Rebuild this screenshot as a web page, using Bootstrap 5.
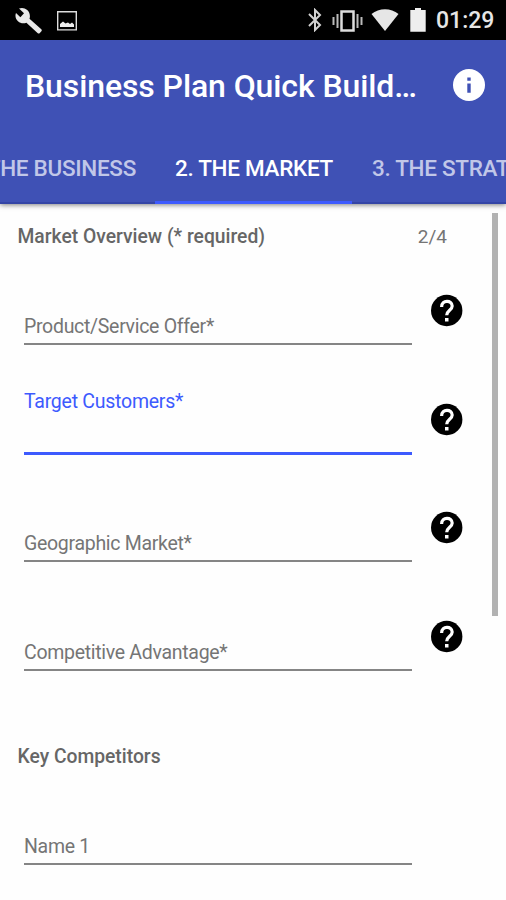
<!DOCTYPE html>
<html lang="en">
<head>
<meta charset="utf-8">
<meta name="viewport" content="width=device-width, initial-scale=1">
<title>Business Plan Quick Builder</title>
<link href="https://cdn.jsdelivr.net/npm/bootstrap@5.3.0/dist/css/bootstrap.min.css" rel="stylesheet">
<style>
body{font-family:Roboto,sans-serif;width:506px;height:900px;overflow:hidden;background:#fefefe;color:#666}
svg{display:block;flex:none}
.status{height:40px;background:#000;color:#e6e6e6;padding:0 13px 0 15px}
.clock{font-size:23px;font-weight:500;line-height:40px;width:57px;margin-left:10px;padding-top:2px}
.ic-photo{margin-left:14px;margin-top:1px}
.ic-vibrate{margin-left:9px;margin-top:1px}
.ic-wifi{margin-left:8px}
.ic-battery{margin-left:11px}
.appbar{height:164px;background:#3f51b5;color:#fff;box-shadow:0 1px 5px rgba(0,0,0,.5)}
.titlebar{height:90px;padding:0 20px 0 25px}
.titlebar h1{font-size:32px;font-weight:500;line-height:40px;letter-spacing:-.1px;padding-top:1px}
.tabs{height:74px}
.tab{height:74px;padding:2px 19px 0 20px;font-size:22.5px;font-weight:500;line-height:73px;letter-spacing:-.3px;color:#c1c7e8;flex:none;box-shadow:inset 0 -2px #3445a6}
.tab-prev{width:155px}
.tab-now{width:197px;color:#fff;box-shadow:inset 0 -3px #3d5afe}
.tab-next{width:154px}
.section{font-size:19.3px;font-weight:500;padding:2px 59px 0 17.5px}
.overview{height:64px}
.competitors{height:86px;padding-top:24px}
.count{font-weight:400;color:#757575;font-size:19px}
.field{height:108.6px;padding-left:24px}
.entry{width:388px;height:77px;border-bottom:2px solid #858585;color:#757575;font-size:19.5px;letter-spacing:-.3px;line-height:24px;padding-bottom:4px}
.entry.focused{height:78px;border-bottom:3px solid #3d5afe;color:#3d5afe;letter-spacing:-.25px;padding-top:13px}
.help{margin:26px 0 0 19px}
.scroll-thumb{right:8px;top:213px;width:6px;height:403px;background:#b2b2b2}
</style>
</head>
<body class="position-relative">
<header>
  <div class="status d-flex align-items-center">
    <svg width="28" height="27" viewBox="0 0 28 27"><path fill="#e8e8e8" d="M26.300 22.200 14.500 11.800c1-3 .2-6.500-2.300-8.800C9.800.8 6.500.3 4 1.600l5 4.600-3.600 4L1 6c-1.200 3-.3 6.100 2 8.300 2.400 2.200 5.600 2.600 8.400 1.400l11.400 10.500c.5.5 1.300.5 1.800 0l1.800-2c.6-.6.5-1.400-.1-2z"/></svg>
    <svg class="ic-photo" width="20" height="20" viewBox="0 0 20 20"><path fill="none" stroke="#ddd" stroke-width="1.400" d="M.7.700h18.600v18.200H.7z"/><path fill="#eee" d="M3 16v-3l3-2.500 2.500 2 2.500-1 2 1.500 2-1.500 2 2V16z"/></svg>
    <svg class="ms-auto" width="16" height="24" viewBox="0 0 16 24"><path fill="none" stroke="#d2d2d2" stroke-width="2" d="m2 6 11 11-5 5V2l5 5L2 18"/></svg>
    <svg class="ic-vibrate" width="31" height="24" viewBox="0 0 31 24"><path fill="none" stroke="#ddd" stroke-width="2.500" d="M9.500 2.500h12v19h-12z"/><path fill="none" stroke="#bbb" stroke-width="2" d="M5.500 5v14M1.500 8v8M25.500 5v14M29.500 8v8"/></svg>
    <svg class="ic-wifi" width="28" height="24" viewBox="0 0 28 24"><path fill="#e6e6e6" d="M.5 6C8-.3 20-.3 27.500 6L14 23z"/></svg>
    <svg class="ic-battery" width="16" height="24" viewBox="0 0 16 24"><path fill="#eee" d="M5 0h6v2h4.700v21.700H.3V2H5z"/></svg>
    <span class="clock">01:29</span>
  </div>
  <div class="appbar">
    <div class="titlebar d-flex align-items-center justify-content-between">
      <h1 class="m-0 text-nowrap">Business Plan Quick Build…</h1>
      <svg width="34" height="34" viewBox="0 0 34 34"><circle cx="17" cy="17" r="16" fill="#fff"/><path fill="#3f51b5" d="M15.300 9.500h3.400v3.200h-3.400zM15.300 15.500h3.400v9.200h-3.400z"/></svg>
    </div>
    <nav class="tabs d-flex overflow-hidden text-nowrap">
      <div class="tab tab-prev d-flex justify-content-end overflow-hidden"><span>1. THE BUSINESS</span></div>
      <div class="tab tab-now"><span>2. THE MARKET</span></div>
      <div class="tab tab-next"><span>3. THE STRATEGY</span></div>
    </nav>
  </div>
</header>
<main>
  <div class="section overview d-flex align-items-center justify-content-between"><span>Market Overview (* required)</span><span class="count">2/4</span></div>
  <div class="field d-flex align-items-start"><div class="entry d-flex align-items-end"><span>Product/Service Offer*</span></div><svg class="help" width="32" height="33"><use href="#help"/></svg></div>
  <div class="field d-flex align-items-start"><div class="entry focused d-flex align-items-start"><span>Target Customers*</span></div><svg class="help" width="32" height="33"><use href="#help"/></svg></div>
  <div class="field d-flex align-items-start"><div class="entry d-flex align-items-end"><span>Geographic Market*</span></div><svg class="help" width="32" height="33"><use href="#help"/></svg></div>
  <div class="field d-flex align-items-start"><div class="entry d-flex align-items-end"><span>Competitive Advantage*</span></div><svg class="help" width="32" height="33"><use href="#help"/></svg></div>
  <div class="section competitors d-flex align-items-center"><span>Key Competitors</span></div>
  <div class="field d-flex align-items-start"><div class="entry d-flex align-items-end"><span>Name 1</span></div></div>
</main>
<div class="scroll-thumb position-absolute"></div>
<svg width="0" height="0" class="position-absolute"><symbol id="help" viewBox="0 0 32 33"><circle cx="15.700" cy="16.500" r="15.700"/><path fill="none" stroke="#fff" stroke-width="3.200" d="M10.600 12.900c0-7.300 10.600-7.300 10.600-.9 0 4.300-5.500 4.300-5.500 9.300"/><path fill="#fff" d="M14 24h3.500v3.500H14z"/></symbol></svg>
<script src="https://cdn.jsdelivr.net/npm/bootstrap@5.3.0/dist/js/bootstrap.bundle.min.js"></script>
</body>
</html>
